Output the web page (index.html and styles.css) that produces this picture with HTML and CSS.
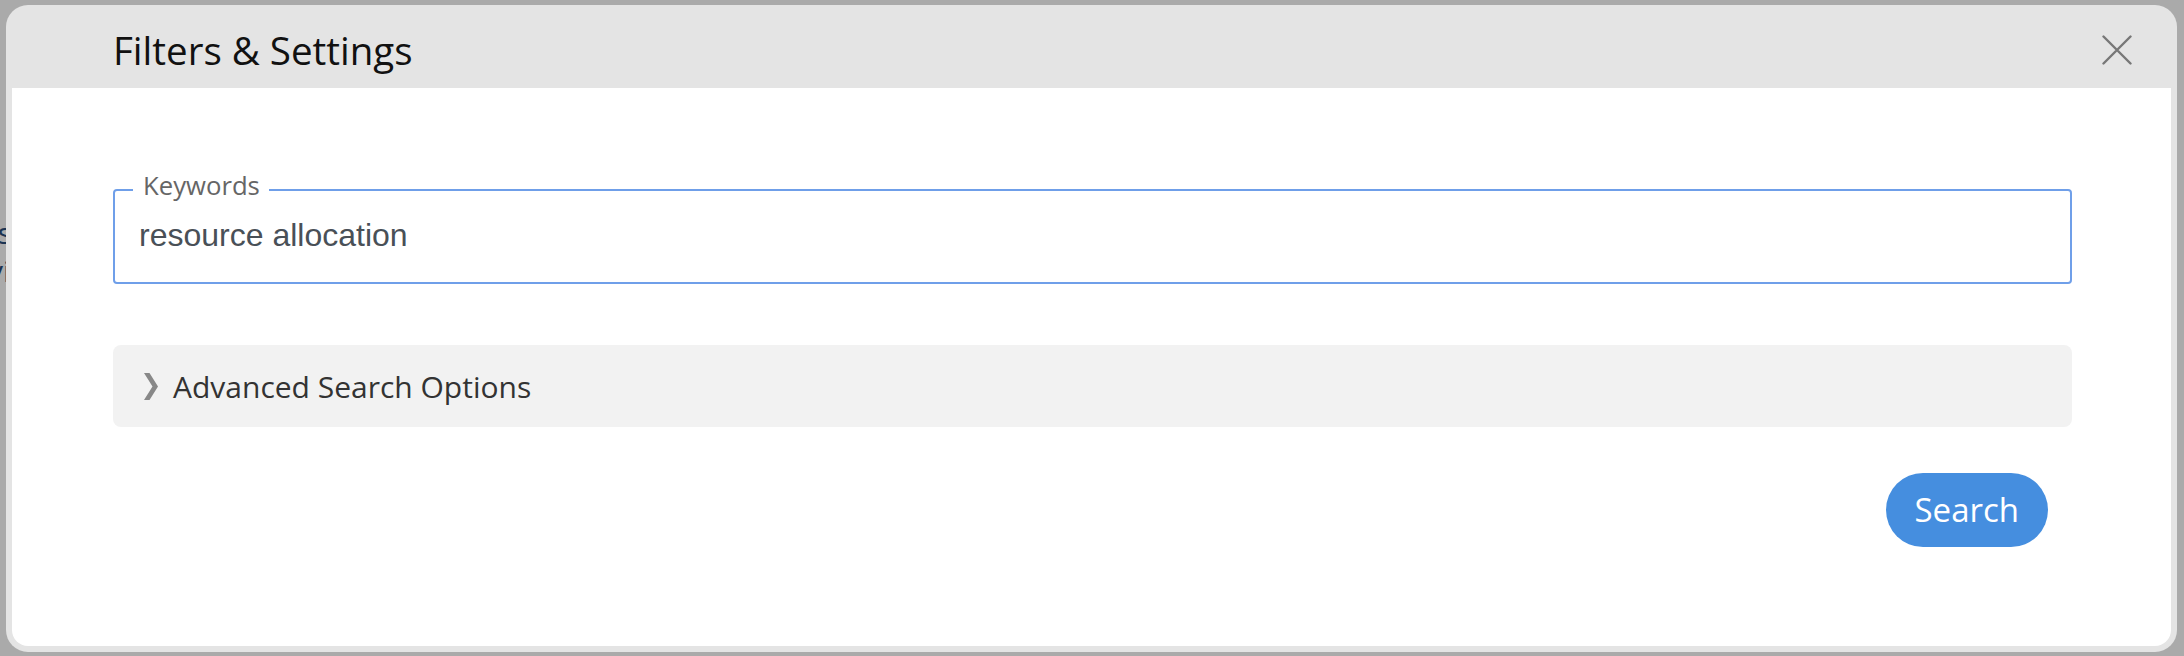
FILE: index.html
```html
<!DOCTYPE html>
<html lang="en">
<head>
<meta charset="utf-8">
<title>Filters &amp; Settings</title>
<link rel="stylesheet" href="styles.css">
</head>
<body>
<div class="page-behind">
  <p class="bg-line bg-line-1">es</p>
  <p class="bg-line bg-line-2">vi</p>
</div>
<div class="modal">
  <div class="modal-header">
    <h2 class="modal-title">Filters &amp; Settings</h2>
    <button class="close-btn" aria-label="Close">
      <svg width="30" height="30" viewBox="0 0 30 30"><path d="M1.5 1.5 L28.5 28.5 M28.5 1.5 L1.5 28.5" stroke="#777" stroke-width="2.4" stroke-linecap="round" fill="none"/></svg>
    </button>
  </div>
  <div class="modal-body">
    <fieldset class="field">
      <legend class="field-label">Keywords</legend>
      <div class="field-value">resource allocation</div>
    </fieldset>
    <div class="accordion">
      <svg class="chevron" width="14" height="27" viewBox="0 0 14 27"><polygon points="0,0 5.5,0 14,13.5 5.5,27 0,27 8.5,13.5" fill="#888"/></svg>
      <span class="accordion-title">Advanced Search Options</span>
    </div>
    <div class="actions">
      <button class="search-btn">Search</button>
    </div>
  </div>
</div>
</body>
</html>
```
FILE: styles.css
```css
html, body {
  margin: 0;
  padding: 0;
}
body {
  width: 2184px;
  height: 656px;
  background: #aaaaaa;
  overflow: hidden;
  position: relative;
  font-family: "Open Sans", "Noto Sans", sans-serif;
}
.page-behind {
  position: absolute;
  left: -19px;
  top: 214px;
}
.bg-line {
  margin: 0;
  font-size: 30px;
  line-height: 38px;
  color: #1a3352;
}
.bg-line-2 {
  padding-left: 7px;
}
.modal {
  position: absolute;
  left: 6px;
  top: 5px;
  width: 2171px;
  height: 647px;
  box-sizing: border-box;
  background: #e4e4e4;
  border-radius: 22px;
  padding: 0 6px 6px;
  display: flex;
  flex-direction: column;
}
.modal-header {
  height: 83px;
  flex: none;
  display: flex;
  justify-content: space-between;
  align-items: flex-start;
  padding: 0 39px 0 101px;
}
.modal-title {
  margin: 19px 0 0;
  font-size: 38.5px;
  font-weight: 400;
  line-height: 52px;
  color: #111;
}
.close-btn {
  margin-top: 30px;
  width: 30px;
  height: 30px;
  padding: 0;
  border: none;
  background: none;
  display: block;
}
.close-btn svg {
  display: block;
}
.modal-body {
  flex: 1;
  background: #fff;
  border-radius: 0 0 16px 16px;
  padding: 80px 99px 0 101px;
}
.field {
  margin: 0;
  min-width: 0;
  border: 2px solid #6f9fe9;
  border-radius: 4px;
  padding: 0 24px 28px 24px;
}
.field-label {
  margin-left: -6px;
  padding: 0 9px 8px 10px;
  font-size: 25.7px;
  color: #666;
  line-height: normal;
}
.field-value {
  padding-top: 6px;
  font-family: "Liberation Sans", Arial, sans-serif;
  font-size: 32px;
  line-height: 37px;
  color: #495057;
}
.accordion {
  margin-top: 61px;
  height: 82px;
  background: #f2f2f2;
  border-radius: 8px;
  display: flex;
  align-items: center;
  gap: 15px;
  padding-left: 31px;
}
.chevron {
  display: block;
}
.accordion-title {
  font-size: 30px;
  color: #333;
}
.actions {
  margin-top: 46px;
  display: flex;
  justify-content: flex-end;
  padding-right: 24px;
}
.search-btn {
  height: 74px;
  padding: 0 29px;
  border: none;
  border-radius: 37px;
  background: #458edf;
  color: #fff;
  font-family: "Open Sans", "Noto Sans", sans-serif;
  font-size: 33px;
  line-height: 74px;
}
```
